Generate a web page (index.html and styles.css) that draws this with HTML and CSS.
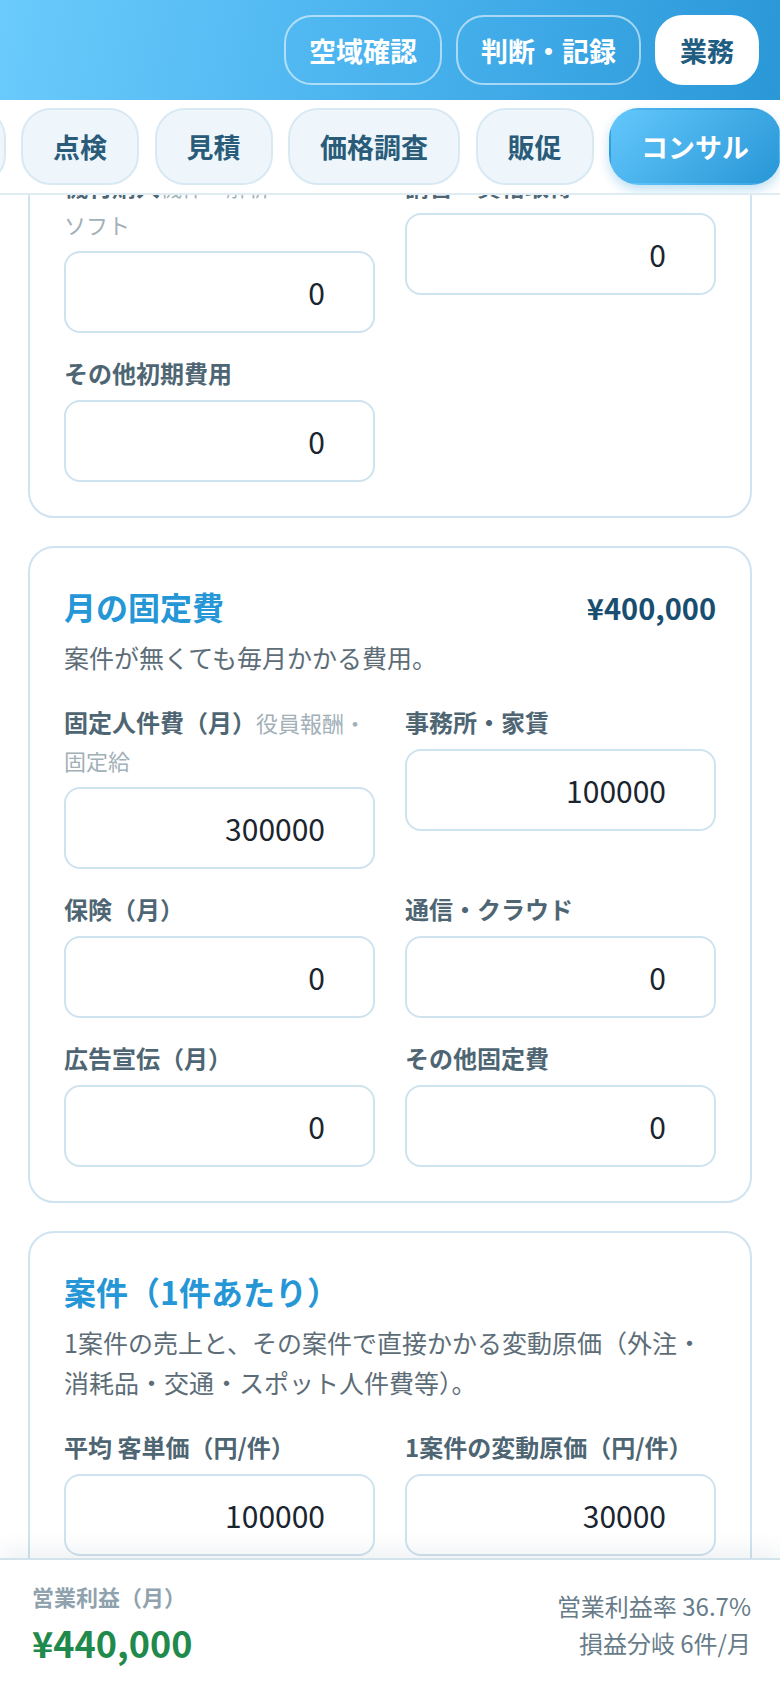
FILE: index.html
```html
<!DOCTYPE html>
<html lang="ja">
<head>
<meta charset="utf-8">
<meta name="viewport" content="width=device-width, initial-scale=1">
<title>業務 - コンサル</title>
<link rel="stylesheet" href="styles.css">
</head>
<body>
<div class="app">
  <header class="topbar">
    <nav class="top-nav">
      <button class="top-btn" type="button">空域確認</button>
      <button class="top-btn" type="button">判断・記録</button>
      <button class="top-btn is-active" type="button">業務</button>
    </nav>
  </header>

  <div class="tabbar">
    <div class="tabs">
      <span class="tab">収支</span>
      <span class="tab">点検</span>
      <span class="tab">見積</span>
      <span class="tab">価格調査</span>
      <span class="tab">販促</span>
      <span class="tab is-active">コンサル</span>
    </div>
  </div>

  <main class="content">
    <section class="card card--continued">
      <div class="grid">
        <div class="field">
          <label class="label">機材購入<span class="hint">機体・解析<br>ソフト</span></label>
          <input class="num" type="text" inputmode="numeric" value="0">
        </div>
        <div class="field">
          <label class="label">講習・資格取得</label>
          <input class="num" type="text" inputmode="numeric" value="0">
        </div>
        <div class="field">
          <label class="label">その他初期費用</label>
          <input class="num" type="text" inputmode="numeric" value="0">
        </div>
      </div>
    </section>

    <section class="card">
      <div class="card-head">
        <h2 class="card-title">月の固定費</h2>
        <span class="card-total">¥400,000</span>
      </div>
      <p class="card-desc">案件が無くても毎月かかる費用。</p>
      <div class="grid">
        <div class="field">
          <label class="label">固定人件費（月）<span class="hint">役員報酬・固定給</span></label>
          <input class="num" type="text" inputmode="numeric" value="300000">
        </div>
        <div class="field">
          <label class="label">事務所・家賃</label>
          <input class="num" type="text" inputmode="numeric" value="100000">
        </div>
        <div class="field">
          <label class="label">保険（月）</label>
          <input class="num" type="text" inputmode="numeric" value="0">
        </div>
        <div class="field">
          <label class="label">通信・クラウド</label>
          <input class="num" type="text" inputmode="numeric" value="0">
        </div>
        <div class="field">
          <label class="label">広告宣伝（月）</label>
          <input class="num" type="text" inputmode="numeric" value="0">
        </div>
        <div class="field">
          <label class="label">その他固定費</label>
          <input class="num" type="text" inputmode="numeric" value="0">
        </div>
      </div>
    </section>

    <section class="card">
      <div class="card-head">
        <h2 class="card-title">案件（1件あたり）</h2>
      </div>
      <p class="card-desc">1案件の売上と、その案件で直接かかる変動原価（外注・消耗品・交通・スポット人件費等）。</p>
      <div class="grid">
        <div class="field">
          <label class="label">平均 客単価（円/件）</label>
          <input class="num" type="text" inputmode="numeric" value="100000">
        </div>
        <div class="field">
          <label class="label">1案件の変動原価（円/件）</label>
          <input class="num" type="text" inputmode="numeric" value="30000">
        </div>
        <div class="field">
          <label class="label">月の案件数（件）</label>
          <input class="num" type="text" inputmode="numeric" value="10">
        </div>
      </div>
    </section>
  </main>

  <footer class="summary">
    <div class="summary-main">
      <div class="summary-label">営業利益（月）</div>
      <div class="summary-value">¥440,000</div>
    </div>
    <div class="summary-side">
      <div>営業利益率 36.7%</div>
      <div>損益分岐 6件/月</div>
    </div>
  </footer>
</div>
</body>
</html>
```

FILE: styles.css
```css
html, body {
  margin: 0;
  height: 100%;
}

body {
  font-family: "Noto Sans CJK JP", "Noto Sans", sans-serif;
  color: #1d2630;
  background: #ffffff;
}

.app {
  height: 100vh;
  display: flex;
  flex-direction: column;
  overflow: hidden;
}

/* top header */
.topbar {
  flex: none;
  height: 100px;
  box-sizing: border-box;
  padding-right: 21px;
  background: linear-gradient(100deg, #6acbfc 0%, #46b0ec 55%, #2a97d7 100%);
  display: flex;
  align-items: center;
  justify-content: flex-end;
}

.top-nav {
  display: flex;
  gap: 14px;
}

.top-btn {
  font: inherit;
  font-size: 27px;
  font-weight: 700;
  line-height: 1;
  height: 70px;
  padding: 0 23px;
  border: 2px solid rgba(255, 255, 255, 0.55);
  border-radius: 28px;
  background: transparent;
  color: #ffffff;
}

.top-btn.is-active {
  background: #ffffff;
  border-color: #ffffff;
  color: #1f5e82;
}

/* tab row */
.tabbar {
  flex: none;
  background: #ffffff;
  border-bottom: 2px solid #e0ecf3;
  padding: 8px 0;
  overflow: hidden;
}

.tabs {
  display: flex;
  justify-content: flex-end;
  gap: 15.5px;
  margin-right: -1px;
}

.tab {
  flex: none;
  height: 77px;
  box-sizing: border-box;
  padding: 0 30px;
  border: 2px solid #d8e9f4;
  border-radius: 30px;
  background: #eef6fc;
  color: #2a5c79;
  font-size: 27px;
  font-weight: 700;
  display: flex;
  align-items: center;
}

.tab.is-active {
  background: linear-gradient(135deg, #63c7fb 0%, #2896d6 100%);
  border-color: transparent;
  color: #ffffff;
  box-shadow: 0 5px 12px rgba(40, 150, 214, 0.3);
}

/* content */
.content {
  flex: 1;
  min-height: 0;
  overflow: hidden;
  padding: 0 28px;
  display: flex;
  flex-direction: column;
  gap: 28px;
}

.card {
  flex: none;
  border: 2px solid #cfe4f0;
  border-radius: 26px;
  padding: 36px 34px 34px;
}

.card--continued {
  margin-top: -66px;
}

.card-head {
  display: flex;
  justify-content: space-between;
  align-items: center;
  margin-bottom: 8px;
}

.card-title {
  margin: 0;
  font-size: 32px;
  line-height: 45px;
  font-weight: 700;
  color: #2596d6;
}

.card-total {
  font-size: 29px;
  font-weight: 700;
  color: #184e70;
}

.card-desc {
  margin: 0 0 26px;
  font-size: 25px;
  line-height: 40px;
  color: #5d6d77;
}

.grid {
  display: grid;
  grid-template-columns: 1fr 1fr;
  column-gap: 30px;
  row-gap: 21px;
  align-items: start;
}

.field {
  display: flex;
  flex-direction: column;
}

.label {
  font-size: 24px;
  line-height: 38px;
  font-weight: 700;
  color: #4e6673;
  margin-bottom: 8px;
}

.hint {
  font-size: 22px;
  font-weight: 400;
  color: #a2b0b8;
}

.num {
  font: inherit;
  font-size: 30px;
  height: 82px;
  width: 100%;
  box-sizing: border-box;
  border: 2px solid #cfe3ef;
  border-radius: 16px;
  padding: 0 48px 0 16px;
  text-align: right;
  color: #1b2530;
  background: #ffffff;
  outline: none;
}

/* bottom summary */
.summary {
  flex: none;
  position: relative;
  z-index: 1;
  background: #ffffff;
  border-top: 2px solid #d3e3ec;
  box-shadow: 0 -8px 20px rgba(30, 60, 90, 0.07);
  padding: 21px 29px 21px 32px;
  display: flex;
  justify-content: space-between;
  align-items: center;
}

.summary-label {
  font-size: 22px;
  line-height: 30px;
  font-weight: 700;
  color: #8fa2ad;
}

.summary-value {
  margin-top: 6px;
  font-size: 36px;
  line-height: 50px;
  font-weight: 700;
  color: #1f8a4c;
}

.summary-side {
  text-align: right;
  font-size: 24px;
  line-height: 37px;
  color: #677c88;
}
```
